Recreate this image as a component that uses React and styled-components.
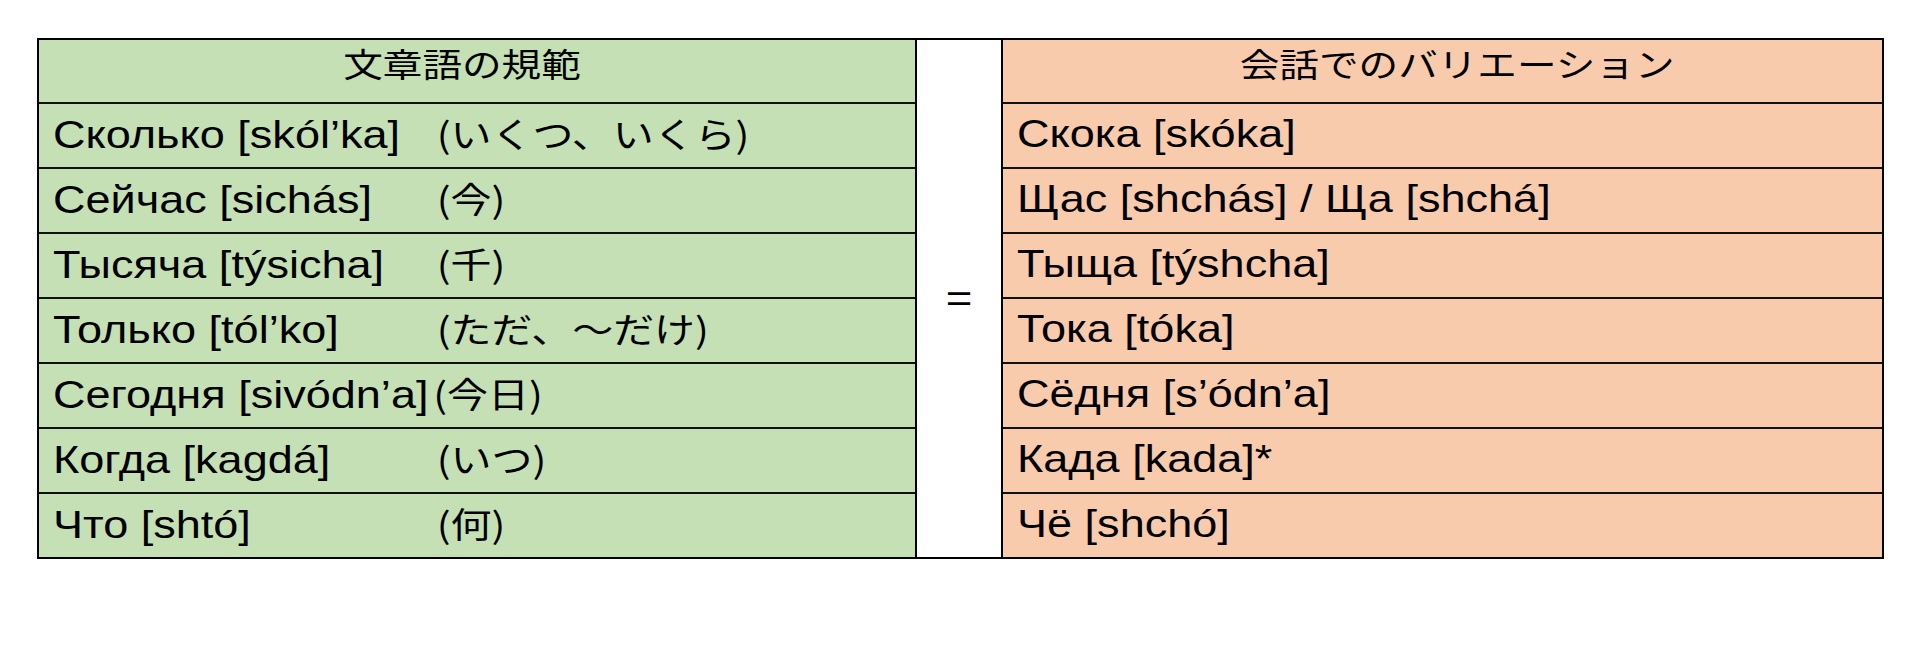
import React from 'react'
import styled, { createGlobalStyle } from 'styled-components'

const GlobalStyle = createGlobalStyle`
  html, body {
    margin: 0;
    padding: 0;
    background: #fff;
  }
  body {
    font-family: "Liberation Sans", Arial, "Noto Sans CJK JP", sans-serif;
    color: #000;
  }
`

const written = [
  { ru: 'Сколько [skól’ka]', ja: '(いくつ、いくら)' },
  { ru: 'Сейчас [sichás]', ja: '(今)' },
  { ru: 'Тысяча [týsicha]', ja: '(千)' },
  { ru: 'Только [tól’ko]', ja: '(ただ、～だけ)' },
  { ru: 'Сегодня [sivódn’a]', ja: '(今日)', inline: true },
  { ru: 'Когда [kagdá]', ja: '(いつ)' },
  { ru: 'Что [shtó]', ja: '(何)' },
]

const spoken = [
  'Скока [skóka]',
  'Щас [shchás] / Ща [shchá]',
  'Тыща [týshcha]',
  'Тока [tóka]',
  'Сёдня [s’ódn’a]',
  'Када [kada]*',
  'Чё [shchó]',
]

const Page = styled.div`
  width: 1920px;
  height: 646px;
  padding: 38px 0 0 37px;
  box-sizing: border-box;
`

const Board = styled.div`
  display: flex;
  align-items: stretch;
`

const Panel = styled.div`
  width: ${p => p.$width}px;
  background: ${p => p.$tone};
  border: 2px solid #000;
  box-sizing: border-box;
  display: flex;
  flex-direction: column;
`

const HeaderRow = styled.div`
  height: 62px;
  display: flex;
  justify-content: center;
  align-items: flex-start;
  padding-top: 7px;
  padding-left: ${p => (p.$shift > 0 ? p.$shift : 0)}px;
  padding-right: ${p => (p.$shift < 0 ? -p.$shift : 0)}px;
  box-sizing: border-box;
`

const HeaderText = styled.span`
  display: inline-block;
  font-family: "Noto Sans CJK JP", sans-serif;
  font-size: 33px;
  line-height: 1;
  transform: scaleX(1.2);
  white-space: nowrap;
`

const Row = styled.div`
  height: 65px;
  border-top: 2px solid #111;
  box-sizing: border-box;
  display: flex;
  align-items: center;
  padding-left: ${p => p.$pad}px;
  padding-bottom: 2px;
`

const Line = styled.span`
  display: inline-block;
  white-space: nowrap;
  transform: scaleX(1.17);
  transform-origin: left center;
  font-size: 38.5px;
  line-height: 1;
`

const Ru = styled.span`
  display: inline-block;
  min-width: ${p => (p.$inline ? 0 : 328)}px;
  margin-right: ${p => (p.$inline ? 4 : 0)}px;
`

const Ja = styled.span`
  font-family: "Noto Sans CJK JP", sans-serif;
  font-size: 35px;
`

const Middle = styled.div`
  width: 84px;
  border-top: 2px solid #000;
  border-bottom: 2px solid #000;
  background: #fff;
  display: flex;
  align-items: center;
  justify-content: center;
`

const Equals = styled.span`
  display: inline-block;
  font-size: 38px;
  transform: scaleX(1.2);
  line-height: 1;
`

export default function App() {
  return (
    <Page>
      <GlobalStyle />
      <Board>
        <Panel $width={880} $tone="#c5e0b4">
          <HeaderRow $shift={-30}>
            <HeaderText>文章語の規範</HeaderText>
          </HeaderRow>
          {written.map(row => (
            <Row key={row.ru} $pad={14}>
              <Line>
                <Ru $inline={row.inline}>{row.ru}</Ru>
                <Ja>{row.ja}</Ja>
              </Line>
            </Row>
          ))}
        </Panel>
        <Middle>
          <Equals>=</Equals>
        </Middle>
        <Panel $width={883} $tone="#f8cbad">
          <HeaderRow $shift={30}>
            <HeaderText>会話でのバリエーション</HeaderText>
          </HeaderRow>
          {spoken.map(text => (
            <Row key={text} $pad={14}>
              <Line>{text}</Line>
            </Row>
          ))}
        </Panel>
      </Board>
    </Page>
  )
}
